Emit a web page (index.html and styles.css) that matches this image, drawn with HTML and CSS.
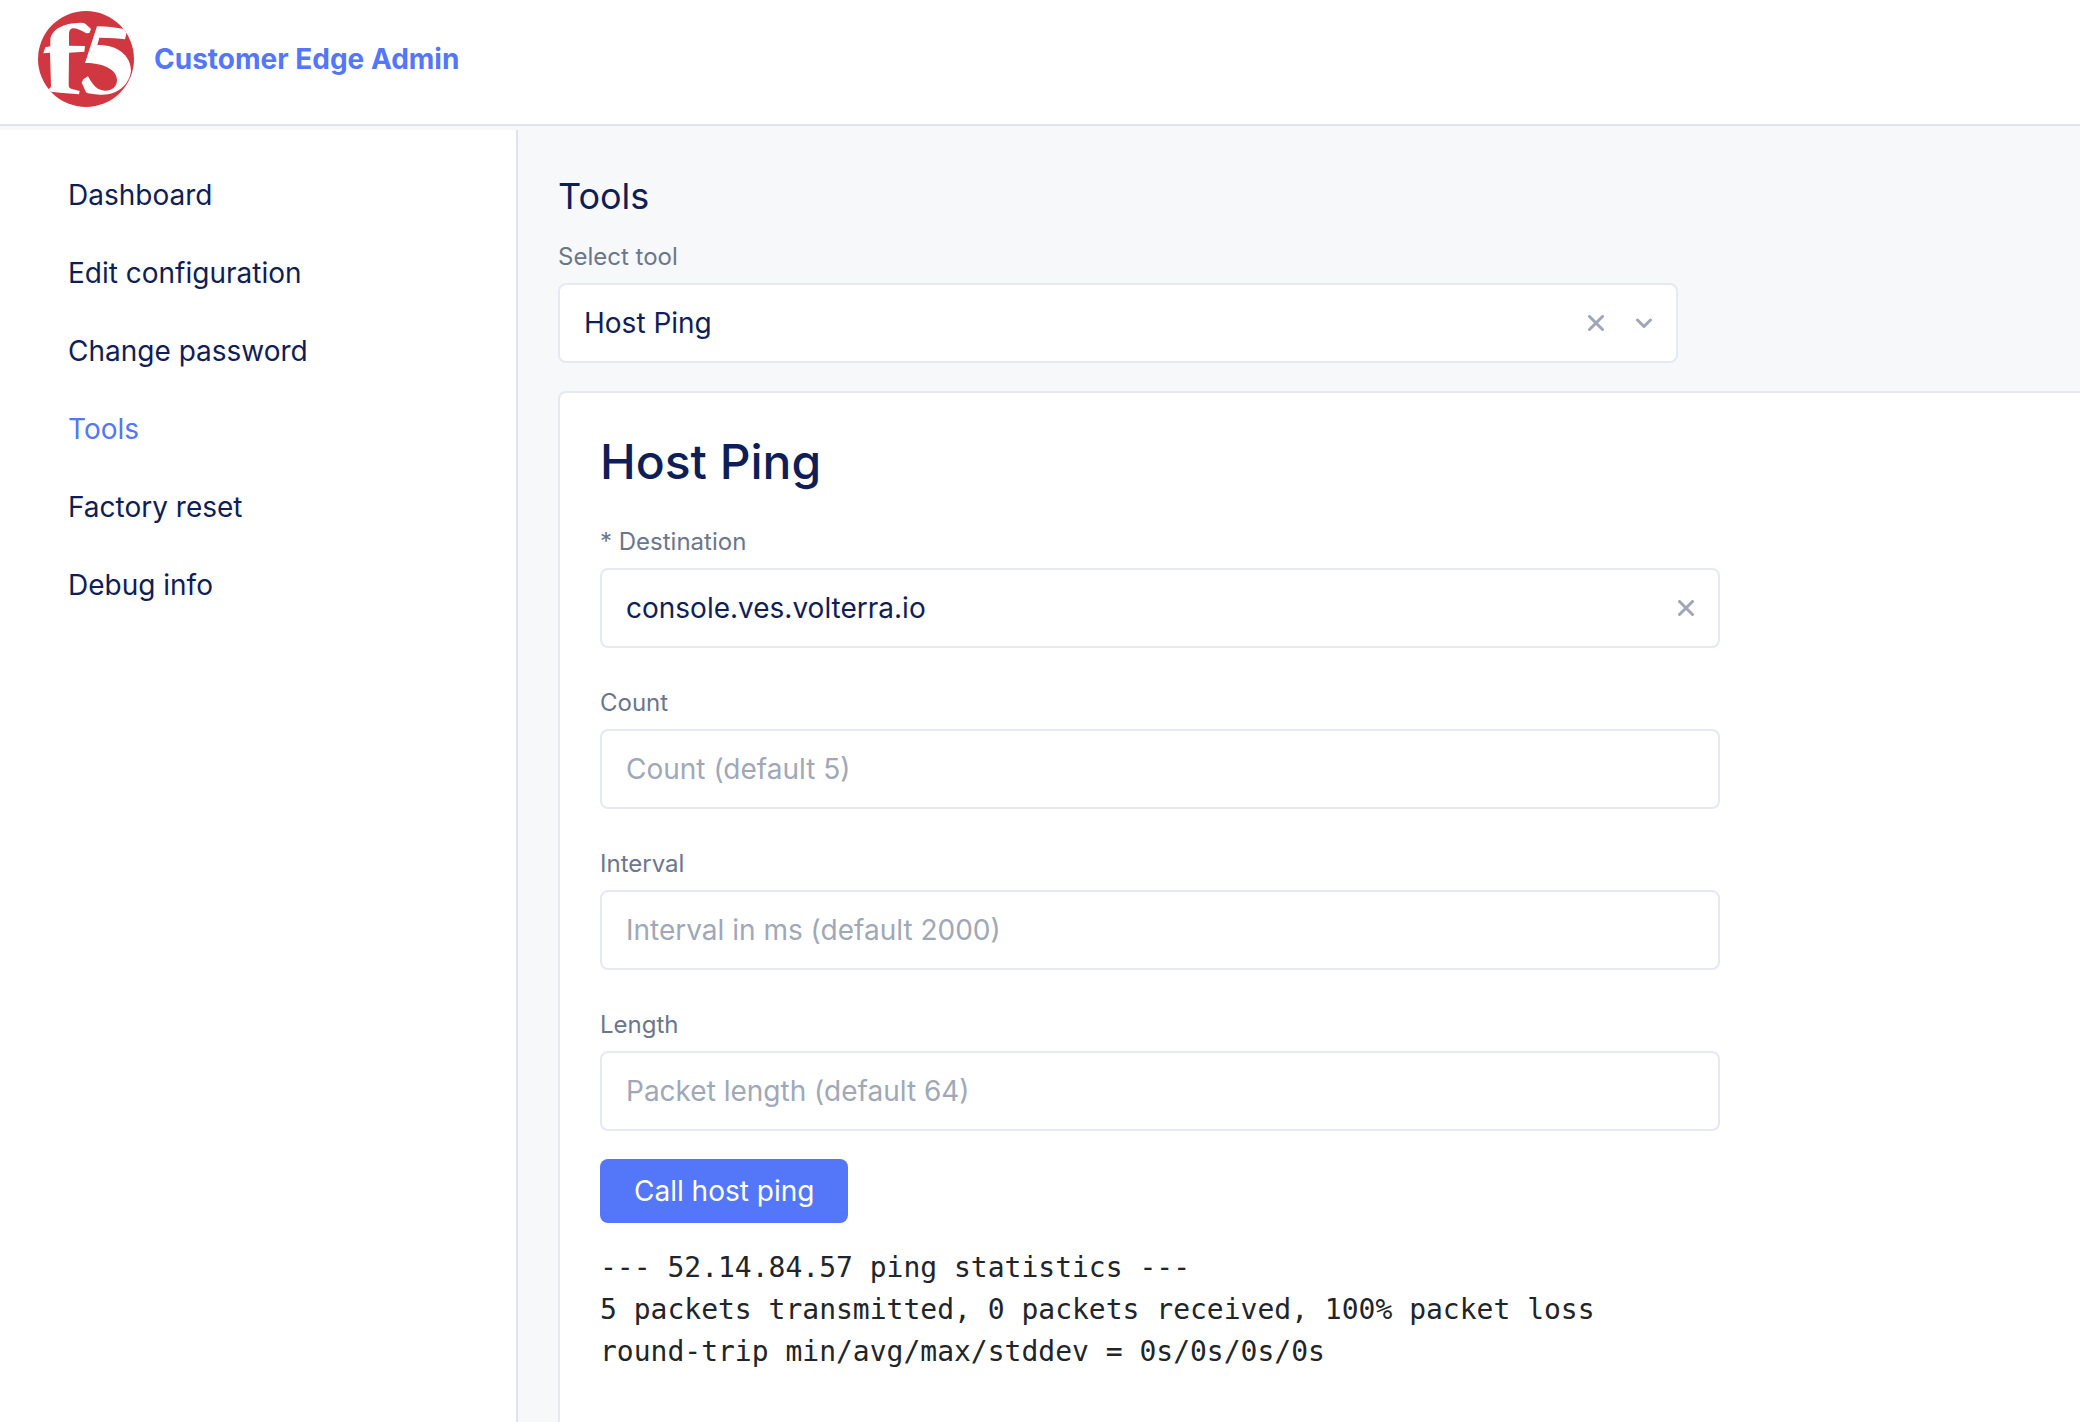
FILE: index.html
```html
<!DOCTYPE html>
<html lang="en">
<head>
  <meta charset="utf-8">
  <meta name="viewport" content="width=device-width, initial-scale=1">
  <title>Customer Edge Admin</title>
  <link rel="stylesheet" href="styles.css">
</head>
<body>
  <header class="topbar">
    <svg class="logo" viewBox="54 33 288 288" role="img" aria-label="F5">
      <defs><clipPath id="disc"><circle cx="198" cy="177" r="144"/></clipPath></defs>
      <circle cx="198" cy="177" r="144" fill="#d03741"/>
      <g fill="#fff" clip-path="url(#disc)">
        <path d="M70 160L76 142L91 139V118C95 88 130 69 182 68Q192 68 196 71L213 87L208 99L199 100C184 91 172 85 158 85Q147 87 147 102V137L195 138L193 155L147 158L146 254Q146 265 156 267L179 273L177 283L120 278L80 274L90 264Q93 262 93 257L90 158Z"/>
        <path d="M231 79Q276 80 312 87L320 97L315 118Q290 113 238 113L232 135C290 134 333 165 333 213C328 255 290 287 240 284Q208 283 198 277L185 248L190 238L204 229C219 256 232 272 255 272C277 272 291 259 291 240C291 207 245 188 195 189Z"/>
      </g>
    </svg>
    <a class="brand" href="#">Customer Edge Admin</a>
  </header>
  <div class="shell">
    <nav class="sidebar" aria-label="Main">
      <a class="nav-link" href="#dashboard">Dashboard</a>
      <a class="nav-link" href="#edit">Edit configuration</a>
      <a class="nav-link" href="#password">Change password</a>
      <a class="nav-link active" href="#tools" aria-current="page">Tools</a>
      <a class="nav-link" href="#reset">Factory reset</a>
      <a class="nav-link" href="#debug">Debug info</a>
    </nav>
    <main class="content">
      <h1 class="page-title">Tools</h1>
      <div class="field">
        <label class="label" for="tool">Select tool</label>
        <div class="control">
          <select class="input" id="tool"><option>Host Ping</option></select>
          <button class="clear" type="button" aria-label="Clear tool">
            <svg class="icon" viewBox="0 0 16 16"><path d="M1.5 1.5L14.5 14.5M14.5 1.5L1.5 14.5"/></svg>
          </button>
          <svg class="icon chevron" viewBox="0 0 16 16" aria-hidden="true"><path d="M1.5 5L8 11.5L14.5 5"/></svg>
        </div>
      </div>
      <section class="panel">
        <h2 class="panel-title">Host Ping</h2>
        <form class="form">
          <div class="field">
            <label class="label" for="destination">* Destination</label>
            <div class="control">
              <input class="input" id="destination" type="text" value="console.ves.volterra.io">
              <button class="clear" type="button" aria-label="Clear destination">
                <svg class="icon" viewBox="0 0 16 16"><path d="M1.5 1.5L14.5 14.5M14.5 1.5L1.5 14.5"/></svg>
              </button>
            </div>
          </div>
          <div class="field">
            <label class="label" for="count">Count</label>
            <div class="control"><input class="input" id="count" type="text" placeholder="Count (default 5)"></div>
          </div>
          <div class="field">
            <label class="label" for="interval">Interval</label>
            <div class="control"><input class="input" id="interval" type="text" placeholder="Interval in ms (default 2000)"></div>
          </div>
          <div class="field">
            <label class="label" for="length">Length</label>
            <div class="control"><input class="input" id="length" type="text" placeholder="Packet length (default 64)"></div>
          </div>
        </form>
        <button class="submit" type="button">Call host ping</button>
        <pre class="output">--- 52.14.84.57 ping statistics ---
5 packets transmitted, 0 packets received, 100% packet loss
round-trip min/avg/max/stddev = 0s/0s/0s/0s</pre>
      </section>
    </main>
  </div>
</body>
</html>
```
FILE: styles.css
```css
* {
  box-sizing: border-box;
}

body {
  display: flex;
  flex-direction: column;
  min-height: 100vh;
  margin: 0;
  background: #f7f8fa;
  color: #0f1e57;
  font: 400 28px/42px Inter, "Liberation Sans", sans-serif;
}

.topbar {
  display: flex;
  align-items: center;
  gap: 20px;
  padding: 11px 38px 17px;
  background: #fff;
  border-bottom: 2px solid #dfe4ea;
}

.logo {
  width: 96px;
  height: 96px;
}

.brand {
  color: #5476f8;
  font-weight: 700;
  text-decoration: none;
}

.shell {
  display: flex;
  flex: 1;
}

.sidebar {
  display: flex;
  flex-direction: column;
  flex: none;
  gap: 36px;
  width: 518px;
  margin-top: 4px;
  padding: 44px 68px;
  background: #fff;
  border-right: 2px solid #dfe4ea;
}

.nav-link {
  color: inherit;
  text-decoration: none;
}

.nav-link.active {
  color: #5476f8;
}

.content {
  display: flex;
  flex: 1;
  flex-direction: column;
  min-width: 0;
  padding: 48px 0 0 40px;
}

.page-title {
  margin: 0 0 21px;
  font-size: 36px;
  font-weight: 400;
  line-height: 44px;
}

.field {
  display: flex;
  flex-direction: column;
  gap: 8px;
  width: 100%;
  max-width: 1120px;
}

.label {
  color: #6b768c;
  font-size: 24px;
  line-height: 36px;
}

.control {
  display: flex;
  align-items: center;
  gap: 32px;
  height: 80px;
  padding: 0 24px;
  background: #fff;
  border: 2px solid #e6e9f2;
  border-radius: 8px;
}

.input {
  flex: 1;
  min-width: 0;
  height: 100%;
  padding: 0;
  appearance: none;
  background: none;
  border: 0;
  outline: 0;
  color: inherit;
  font: inherit;
}

.input::placeholder {
  color: #a0a8b8;
  opacity: 1;
}

.clear {
  display: flex;
  padding: 0;
  background: none;
  border: 0;
  cursor: pointer;
}

.icon {
  width: 16px;
  height: 16px;
  fill: none;
  stroke: #9fa6b7;
  stroke-width: 3;
  stroke-linecap: round;
  stroke-linejoin: round;
}

.panel {
  flex: 1;
  margin-top: 28px;
  padding: 40px;
  background: #fff;
  border: solid #e6e9f2;
  border-width: 2px 0 0 2px;
  border-radius: 8px 0 0 0;
}

.panel-title {
  margin: 0 0 33px;
  font-size: 48px;
  font-weight: 500;
  line-height: 58px;
}

.form {
  display: flex;
  flex-direction: column;
  gap: 37px;
}

.submit {
  display: block;
  margin: 28px 0 24px;
  padding: 11px 34px;
  background: #5476f8;
  border: 0;
  border-radius: 8px;
  color: #fff;
  font: inherit;
  cursor: pointer;
}

.output {
  margin: 0;
  color: #212529;
  font: 28px/42px "DejaVu Sans Mono", monospace;
  white-space: pre-wrap;
}
```
